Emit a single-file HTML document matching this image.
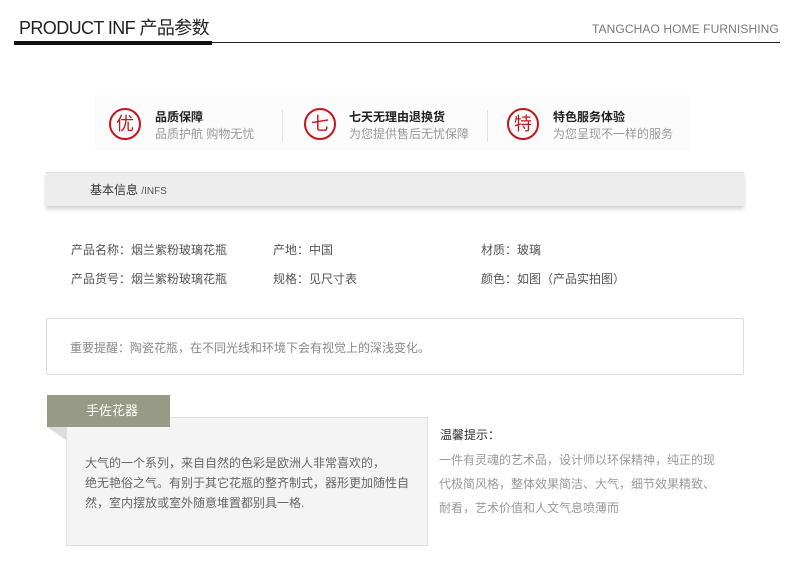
<!DOCTYPE html>
<html><head><meta charset="utf-8"><style>
*{margin:0;padding:0;box-sizing:border-box}
body{width:790px;height:564px;background:#fff;position:relative;overflow:hidden;font-family:"Liberation Sans","Noto Sans CJK SC",sans-serif;font-size:12px;color:#555}
.a{position:absolute;white-space:nowrap}
.circ{position:absolute;width:32px;height:32px;border:2px solid #c4161c;border-radius:50%;color:#c4161c;font-size:18px;line-height:28px;text-align:center}
.t{font-weight:bold;color:#222;font-size:12px}
.s{color:#999;font-size:12px}
.dv{position:absolute;width:1px;height:32px;background:#e2e2e2;top:110px}
</style></head><body>
<div class="a" style="left:19px;top:14px;font-size:18px;color:#222;letter-spacing:-0.6px">PRODUCT INF 产品参数</div>
<div class="a" style="left:14px;top:41px;width:198px;height:4px;background:#111"></div>
<div class="a" style="left:212px;top:42px;width:568px;height:1px;background:#222"></div>
<div class="a" style="left:592px;top:22px;font-size:12px;color:#777;letter-spacing:0.1px">TANGCHAO HOME FURNISHING</div>

<div class="a" style="left:95px;top:95px;width:595px;height:56px;background:#fcfcfc"></div>
<div class="circ" style="left:109px;top:108px">优</div>
<div class="a t" style="left:155px;top:108px">品质保障</div>
<div class="a s" style="left:155px;top:125px">品质护航 购物无忧</div>
<div class="dv" style="left:282px"></div>
<div class="circ" style="left:304px;top:108px">七</div>
<div class="a t" style="left:349px;top:108px">七天无理由退换货</div>
<div class="a s" style="left:349px;top:125px">为您提供售后无忧保障</div>
<div class="dv" style="left:487px"></div>
<div class="circ" style="left:507px;top:108px">特</div>
<div class="a t" style="left:553px;top:108px">特色服务体验</div>
<div class="a s" style="left:553px;top:125px">为您呈现不一样的服务</div>

<div class="a" style="left:46px;top:172px;width:698px;height:34px;background:#ededed;border-top:1px solid #e0e0e0;box-shadow:0 3px 4px rgba(0,0,0,0.18)"></div>
<div class="a" style="left:90px;top:181px;color:#333">基本信息 <span style="font-size:10px;color:#555">/INFS</span></div>

<div class="a" style="left:71px;top:241px">产品名称：烟兰紫粉玻璃花瓶</div>
<div class="a" style="left:273px;top:241px">产地：中国</div>
<div class="a" style="left:481px;top:241px">材质：玻璃</div>
<div class="a" style="left:71px;top:270px">产品货号：烟兰紫粉玻璃花瓶</div>
<div class="a" style="left:273px;top:270px">规格：见尺寸表</div>
<div class="a" style="left:481px;top:270px">颜色：如图（产品实拍图）</div>

<div class="a" style="left:46px;top:318px;width:698px;height:57px;border:1px solid #ddd;border-radius:2px"></div>
<div class="a" style="left:70px;top:339px;color:#888">重要提醒：陶瓷花瓶，在不同光线和环境下会有视觉上的深浅变化。</div>

<div class="a" style="left:66px;top:417px;width:362px;height:129px;background:#f4f4f4;border:1px solid #e0e0e0"></div>
<div class="a" style="left:47px;top:427px;width:0;height:0;border-left:19px solid transparent;border-top:13px solid #dcdcdc"></div>
<div class="a" style="left:47px;top:395px;width:123px;height:32px;background:#979a84;color:#fff;font-size:13px;line-height:32px;padding-left:39px">手佐花器</div>
<div class="a" style="left:85px;top:453px;color:#666;line-height:20px">大气的一个系列，来自自然的色彩是欧洲人非常喜欢的，<br>绝无艳俗之气。有别于其它花瓶的整齐制式，器形更加随性自<br>然，室内摆放或室外随意堆置都别具一格.</div>

<div class="a" style="left:440px;top:426px;color:#333">温馨提示：</div>
<div class="a" style="left:439px;top:448px;color:#999;line-height:24px">一件有灵魂的艺术品，设计师以环保精神，纯正的现<br>代极简风格，整体效果简洁、大气，细节效果精致、<br>耐看，艺术价值和人文气息喷薄而</div>
</body></html>
